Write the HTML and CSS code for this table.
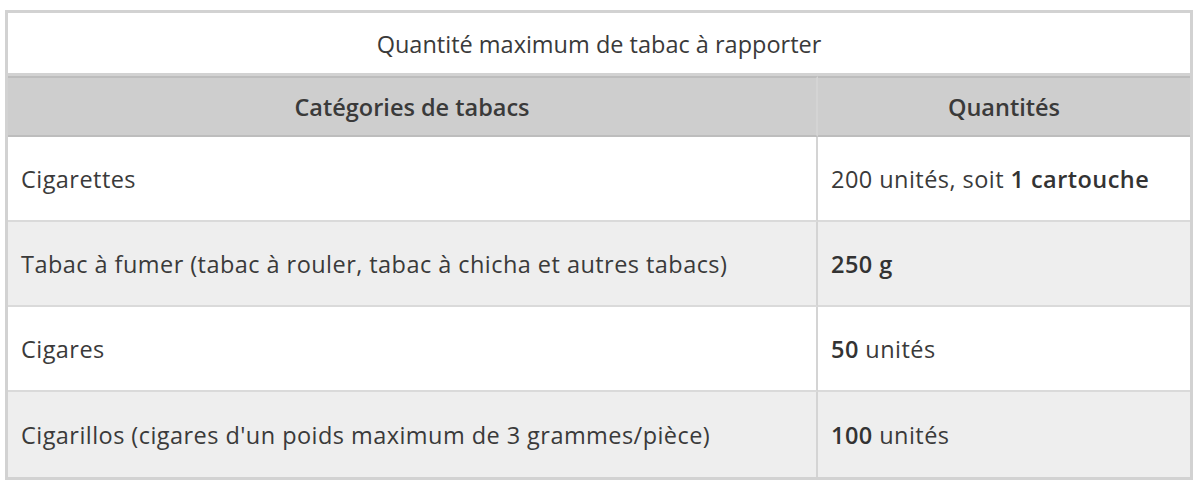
FILE: index.html
```html
<!DOCTYPE html>
<html lang="fr">
<head>
<meta charset="utf-8">
<title>Tabac</title>
<link rel="stylesheet" href="styles.css">
</head>
<body>
<div class="wrap">
<table class="tbl">
  <caption class="cap">Quantité maximum de tabac à rapporter</caption>
  <thead>
    <tr class="head">
      <th class="c1">Catégories de tabacs</th>
      <th class="c2">Quantités</th>
    </tr>
  </thead>
  <tbody>
    <tr class="odd">
      <td class="c1">Cigarettes</td>
      <td class="c2">200 unités, soit <b>1 cartouche</b></td>
    </tr>
    <tr class="even">
      <td class="c1">Tabac à fumer (tabac à rouler, tabac à chicha et autres tabacs)</td>
      <td class="c2"><b>250 g</b></td>
    </tr>
    <tr class="odd">
      <td class="c1">Cigares</td>
      <td class="c2"><b>50</b> unités</td>
    </tr>
    <tr class="even">
      <td class="c1">Cigarillos (cigares d'un poids maximum de 3 grammes/pièce)</td>
      <td class="c2"><b>100</b> unités</td>
    </tr>
  </tbody>
</table>
</div>
</body>
</html>
```
FILE: styles.css
```css
html, body {
  margin: 0;
  padding: 0;
  background: #ffffff;
}
.wrap {
  padding: 10px 7px 0 5px;
}
.tbl {
  width: 1188px;
  border-collapse: separate;
  border-spacing: 0;
  border: 3px solid #d2d2d2;
  font-family: "Open Sans", "Noto Sans", sans-serif;
  font-size: 23.5px;
  color: #3a3a3a;
}
.cap {
  caption-side: top;
  border: 3px solid #d2d2d2;
  border-bottom: none;
  height: 60px;
  line-height: 62px;
  text-align: center;
  background: #ffffff;
}
.tbl th, .tbl td {
  text-align: left;
  padding: 0 13px;
  vertical-align: middle;
}
.head th {
  background: #cecece;
  height: 57px;
  font-weight: 600;
  text-align: center;
  border-top: 2px solid #bdbdbd;
  border-bottom: 2px solid #bdbdbd;
}
.c1 {
  width: 782px;
  border-right: 2px solid #d4d4d4;
}
.tbl td {
  height: 83px;
  letter-spacing: 0.45px;
  border-bottom: 2px solid #dadada;
}
.tbl tbody tr:last-child td {
  border-bottom: none;
  height: 85px;
}
.odd td { background: #ffffff; }
.even td { background: #eeeeee; }
b { font-weight: 600; color: #333333; }
```
